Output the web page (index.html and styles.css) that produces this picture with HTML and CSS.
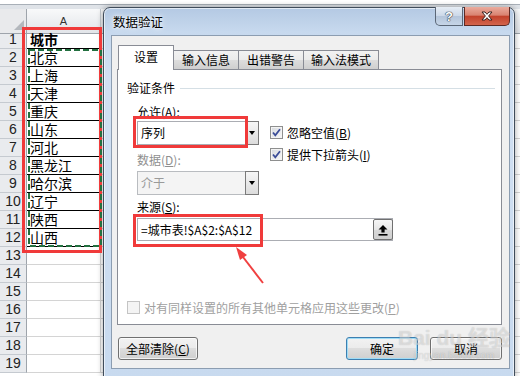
FILE: index.html
```html
<!DOCTYPE html>
<html lang="zh-CN">
<head>
  <meta charset="UTF-8">
  <meta name="viewport" content="width=device-width, initial-scale=1.0">
  <title>数据验证</title>
  <link rel="stylesheet" href="styles.css">
</head>
<body>
<div class="sheet">
  <div class="fbar"></div>
  <div class="fbar-gap"></div>
  <div class="row head"><div class="corner"></div><div class="colhead">A</div><div class="colhead rest-head"></div></div>
  <div class="row"><div class="rh">1</div><div class="ca bd bold">城市</div><div class="rest"></div></div>
  <div class="row"><div class="rh">2</div><div class="ca bd">北京</div><div class="rest"></div></div>
  <div class="row"><div class="rh">3</div><div class="ca bd">上海</div><div class="rest"></div></div>
  <div class="row"><div class="rh">4</div><div class="ca bd">天津</div><div class="rest"></div></div>
  <div class="row"><div class="rh">5</div><div class="ca bd">重庆</div><div class="rest"></div></div>
  <div class="row"><div class="rh">6</div><div class="ca bd">山东</div><div class="rest"></div></div>
  <div class="row"><div class="rh">7</div><div class="ca bd">河北</div><div class="rest"></div></div>
  <div class="row"><div class="rh">8</div><div class="ca bd">黑龙江</div><div class="rest"></div></div>
  <div class="row"><div class="rh">9</div><div class="ca bd">哈尔滨</div><div class="rest"></div></div>
  <div class="row"><div class="rh">10</div><div class="ca bd">辽宁</div><div class="rest"></div></div>
  <div class="row"><div class="rh">11</div><div class="ca bd">陕西</div><div class="rest"></div></div>
  <div class="row"><div class="rh">12</div><div class="ca bd">山西</div><div class="rest"></div></div>
  <div class="row"><div class="rh">13</div><div class="ca"></div><div class="rest"></div></div>
  <div class="row"><div class="rh">14</div><div class="ca"></div><div class="rest"></div></div>
  <div class="row"><div class="rh">15</div><div class="ca"></div><div class="rest"></div></div>
  <div class="row"><div class="rh">16</div><div class="ca"></div><div class="rest"></div></div>
  <div class="row"><div class="rh">17</div><div class="ca"></div><div class="rest"></div></div>
  <div class="row"><div class="rh">18</div><div class="ca"></div><div class="rest"></div></div>
  <div class="row"><div class="rh">19</div><div class="ca"></div><div class="rest"></div></div>
</div>

<div class="dialog">
  <div class="titlebar">
    <span class="title">数据验证</span>
    <div class="caption">
      <span class="cbtn help">?</span>
      <span class="cbtn close">
        <svg width="14" height="10" viewBox="0 0 14 10"><path d="M2 1 L5 1 L7 3.3 L9 1 L12 1 L8.6 5 L12 9 L9 9 L7 6.7 L5 9 L2 9 L5.4 5 Z" fill="#fff" stroke="#3a2320" stroke-width="1"/></svg>
      </span>
    </div>
  </div>

  <div class="client">
    <div class="tabs">
      <div class="tab active">设置</div>
      <div class="tab">输入信息</div>
      <div class="tab">出错警告</div>
      <div class="tab last">输入法模式</div>
    </div>

    <div class="panel">
      <div class="group">验证条件</div>

      <div class="settings">
        <div class="fields">
          <div class="lbl allow-lbl">允许(<u>A</u>):</div>
          <div class="combo"><span class="combo-text">序列</span><span class="combo-btn"><i class="tri"></i></span></div>
          <div class="lbl off data-lbl">数据(<u>D</u>):</div>
          <div class="combo off"><span class="combo-text">介于</span><span class="combo-btn"><i class="tri"></i></span></div>
        </div>
        <div class="checks">
          <div class="check">
            <span class="box"><svg width="11" height="11" viewBox="0 0 11 11"><path d="M2 5.5 L4.3 8.3 L9 2.3" fill="none" stroke="#3b4d98" stroke-width="1.8"/></svg></span>
            <span>忽略空值(<u>B</u>)</span>
          </div>
          <div class="check">
            <span class="box"><svg width="11" height="11" viewBox="0 0 11 11"><path d="M2 5.5 L4.3 8.3 L9 2.3" fill="none" stroke="#3b4d98" stroke-width="1.8"/></svg></span>
            <span>提供下拉箭头(<u>I</u>)</span>
          </div>
        </div>
      </div>

      <div class="lbl src-lbl">来源(<u>S</u>):</div>
      <div class="source">
        <span class="source-text">=城市表!$A$2:$A$12</span>
        <span class="ref-btn"><svg width="10" height="12" viewBox="0 0 10 12"><path d="M5 1 L9.5 5.5 L6.6 5.5 L6.6 8.5 L3.4 8.5 L3.4 5.5 L0.5 5.5 Z" fill="#000"/><rect x="0.5" y="10" width="9" height="1.6" fill="#000"/></svg></span>
      </div>

      <div class="check apply">
        <span class="box off"></span>
        <span>对有同样设置的所有其他单元格应用这些更改(<u>P</u>)</span>
      </div>
    </div>

    <div class="actions">
      <div class="btn clear">全部清除(<u>C</u>)</div>
      <div class="btn ok">确定</div>
      <div class="btn">取消</div>
    </div>
  </div>
</div>

<div class="watermark"><span class="wm-big">Bai du 经验</span><span class="wm-small">jingyan.baidu.com</span></div>

<div class="mark mark-col"></div>
<div class="mark mark-allow"></div>
<div class="mark mark-source"></div>
<svg class="overlay" width="520" height="376" viewBox="0 0 520 376">
  <rect x="29" y="50" width="72" height="196" fill="none" stroke="#237040" stroke-width="2" stroke-dasharray="6 3"/>
  <line x1="263" y1="283" x2="243" y2="257" stroke="#f04040" stroke-width="2"/>
  <polygon points="236,247 247,255 240,260" fill="#f04040"/>
</svg>
</body>
</html>
```

FILE: styles.css
```css
html, body {
  margin: 0;
  padding: 0;
}
body {
  width: 520px;
  height: 376px;
  overflow: hidden;
  position: relative;
  background: #fff;
  font-family: "Noto Sans CJK SC", sans-serif;
  font-size: 12px;
  color: #000;
}
u {
  text-decoration: underline;
  text-underline-offset: 1px;
}

/* sheet behind the dialog */
.fbar {
  height: 4px;
  background: #fff;
  border-bottom: 1px solid #a9b0b8;
}
.fbar-gap {
  height: 4px;
  background: #dfe3e8;
}
.row {
  display: grid;
  grid-template-columns: 27px 74px 1fr;
  height: 18px;
}
.row.head {
  height: 22px;
}
.corner {
  position: relative;
  background: #e9eaec;
  border-right: 1px solid #9ea4ab;
  border-bottom: 1px solid #9ea4ab;
}
.corner::after {
  content: "";
  position: absolute;
  right: 2px;
  bottom: 3px;
  border-left: 10px solid transparent;
  border-bottom: 10px solid #b4b8bd;
}
.colhead {
  background: linear-gradient(#f8f9fa, #e2e5e9);
  border-right: 1px solid #c5cad0;
  border-bottom: 1px solid #9ea4ab;
  font: 11px "Liberation Sans", sans-serif;
  line-height: 24px;
  text-align: center;
  color: #333;
}
.rest-head {
  border-right: none;
}
.rh {
  background: #e9ebee;
  border-right: 1px solid #9ea4ab;
  border-bottom: 1px solid #c5cad0;
  font: 14px "Liberation Sans", sans-serif;
  line-height: 17px;
  text-align: center;
  color: #222;
}
.ca {
  border-right: 1px solid #d4d4d4;
  border-bottom: 1px solid #d4d4d4;
  font-size: 14px;
  line-height: 17px;
  padding-left: 3px;
  white-space: nowrap;
}
.ca.bd {
  border-color: #000;
}
.ca.bold {
  font-weight: 700;
}
.rest {
  border-bottom: 1px solid #d4d4d4;
  background-image: repeating-linear-gradient(90deg, transparent 0 71px, #d4d4d4 71px 72px);
}

/* dialog */
.dialog {
  position: absolute;
  left: 103px;
  top: 7px;
  width: 412px;
  height: 372px;
  box-sizing: border-box;
  display: flex;
  flex-direction: column;
  padding: 0 4px 9px 7px;
  border: 1px solid #404c5a;
  border-radius: 7px 7px 0 0;
  background: linear-gradient(180deg, #b4c9e3 0, #c7d9ee 24px, #d1e0f2 70px, #c8daef 100%);
  box-shadow: 0 0 6px rgba(0, 0, 0, .35), inset 0 0 0 1px rgba(255, 255, 255, .6);
}
.titlebar {
  height: 27px;
  display: flex;
  align-items: flex-start;
  justify-content: space-between;
}
.title {
  margin: 6px 0 0 2px;
  font-size: 12.5px;
  line-height: 16px;
  text-shadow: 0 0 6px #fff, 0 0 3px #fff;
}
.caption {
  display: flex;
  gap: 1px;
  margin-top: -1px;
}
.cbtn {
  height: 19px;
  box-sizing: border-box;
  display: flex;
  align-items: center;
  justify-content: center;
  border: 1px solid #5b6777;
  border-top: none;
}
.cbtn.help {
  width: 28px;
  border-radius: 0 0 0 5px;
  background: linear-gradient(#e6edf5, #cbd8e8 50%, #b4c5da 51%, #c6d5e7);
  font: bold 13px "Liberation Sans", sans-serif;
  color: #fff;
  text-shadow: 0 0 1px #2c3440, 0 0 1px #2c3440, 0 0 1px #2c3440;
}
.cbtn.close {
  width: 46px;
  border-radius: 0 0 5px 0;
  border-color: #5d2a24;
  background: linear-gradient(#eaab9d, #d98371 45%, #c2422c 52%, #d3654d 100%);
}

.client {
  flex: 1;
  display: flex;
  flex-direction: column;
  background: #f0f0f0;
  border: 1px solid #8c9db1;
  padding: 9px 7px 0 5px;
}
.tabs {
  display: flex;
  align-items: flex-end;
  height: 24px;
  margin-left: 1px;
}
.tab {
  height: 19px;
  box-sizing: border-box;
  padding: 0 8px;
  border-top: 1px solid #898c95;
  border-right: 1px solid #898c95;
  background: linear-gradient(#f2f2f2, #ebebeb 50%, #dddddd 51%, #cfcfcf);
  line-height: 18px;
  white-space: nowrap;
}
.tab.last {
  padding: 0 7px;
}
.tab.active {
  position: relative;
  z-index: 1;
  height: 25px;
  margin-bottom: -1px;
  padding: 0 15px;
  border-left: 1px solid #898c95;
  background: #fff;
  line-height: 22px;
}
.panel {
  height: 256px;
  box-sizing: border-box;
  border: 1px solid #898c95;
  background: #fff;
}
.group {
  display: flex;
  align-items: center;
  gap: 5px;
  margin: 10px 6px 0 9px;
  line-height: 16px;
}
.group::after {
  content: "";
  flex: 1;
  height: 1px;
  background: #d5dfe5;
}
.settings {
  display: flex;
  margin: 8px 0 0 19px;
}
.fields {
  width: 122px;
}
.lbl {
  line-height: 16px;
}
.lbl.off {
  color: #8f8f8f;
}
.data-lbl {
  margin-top: 7px;
}
.combo {
  display: flex;
  height: 24px;
  box-sizing: border-box;
  margin-top: 1px;
  border: 1px solid #abadb3;
  background: #fff;
}
.combo.off {
  margin-top: 3px;
  border-color: #b9bcc0;
  background: #f4f4f4;
  color: #9a9a9a;
}
.combo-text {
  flex: 1;
  padding-left: 3px;
  line-height: 22px;
}
.combo-btn {
  width: 12px;
  margin: -1px -1px -1px 0;
  display: flex;
  align-items: center;
  justify-content: center;
  border: 1px solid #7a7a7a;
  background: linear-gradient(#f6f6f6, #dcdcdc);
}
.tri {
  border-top: 4px solid #000;
  border-left: 3.5px solid transparent;
  border-right: 3.5px solid transparent;
}
.checks {
  display: flex;
  flex-direction: column;
  gap: 6px;
  margin-left: 11px;
  padding-top: 20px;
}
.check {
  display: flex;
  align-items: center;
  gap: 4px;
  height: 16px;
  white-space: nowrap;
}
.box {
  width: 13px;
  height: 13px;
  box-sizing: border-box;
  display: flex;
  align-items: center;
  justify-content: center;
  border: 1px solid #8e8f8f;
  background: linear-gradient(135deg, #d6d9de, #f8f8f8);
  box-shadow: inset 0 0 0 1px #f4f4f4;
}
.box.off {
  border-color: #c4c4c4;
  background: #f4f4f4;
}
.src-lbl {
  margin: 4px 0 0 19px;
}
.source {
  display: flex;
  align-items: center;
  justify-content: space-between;
  width: 256px;
  height: 23px;
  box-sizing: border-box;
  margin: 3px 0 0 19px;
  padding-left: 3px;
  border: 1px solid #abadb3;
  background: #fff;
}
.source-text {
  line-height: 21px;
}
.ref-btn {
  width: 20px;
  height: 21px;
  box-sizing: border-box;
  margin-right: -1px;
  display: flex;
  align-items: center;
  justify-content: center;
  border: 1px solid #707070;
  border-radius: 2px;
  background: linear-gradient(#f6f6f6, #e6e6e6 50%, #d8d8d8 51%, #cfcfcf);
}
.check.apply {
  margin: 58px 0 0 9px;
  color: #a0a0a0;
}

.actions {
  display: flex;
  margin-top: 12px;
  padding-left: 1px;
}
.btn {
  width: 72px;
  height: 23px;
  box-sizing: border-box;
  border: 1px solid #707070;
  border-radius: 3px;
  background: linear-gradient(#f2f2f2, #ebebeb 49%, #dddddd 50%, #cfcfcf);
  box-shadow: inset 0 0 0 1px rgba(255, 255, 255, .7);
  line-height: 21px;
  text-align: center;
}
.btn.clear {
  width: 80px;
}
.btn.ok {
  margin-left: auto;
  margin-right: 12px;
  border-color: #3c7fb1;
  box-shadow: inset 0 0 0 1px #9fdcf6;
}

/* annotations laid over the screenshot */
.watermark {
  position: absolute;
  left: 398px;
  top: 326px;
  display: flex;
  flex-direction: column;
  align-items: center;
  color: rgba(255, 255, 255, .45);
  text-shadow: 0 0 1px rgba(0, 0, 0, .22);
  pointer-events: none;
}
.wm-big {
  font: bold 21px "Liberation Sans", "Noto Sans CJK SC", sans-serif;
  line-height: 24px;
}
.wm-small {
  font: 10px "Liberation Sans", sans-serif;
  line-height: 12px;
}
.mark {
  position: absolute;
  box-sizing: border-box;
  border: 3px solid #f03a3a;
  pointer-events: none;
}
.mark-col {
  left: 22px;
  top: 27px;
  width: 80px;
  height: 226px;
}
.mark-allow {
  left: 133px;
  top: 116px;
  width: 115px;
  height: 32px;
}
.mark-source {
  left: 133px;
  top: 214px;
  width: 130px;
  height: 33px;
}
.overlay {
  position: absolute;
  left: 0;
  top: 0;
  pointer-events: none;
}
```
